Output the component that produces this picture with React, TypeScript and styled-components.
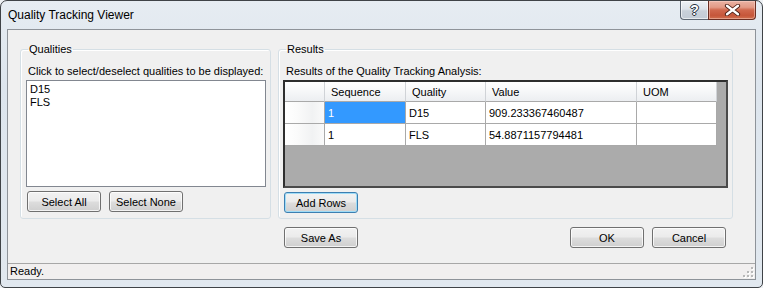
import React from "react";
import styled, { createGlobalStyle } from "styled-components";

const GlobalStyle = createGlobalStyle`
  html, body { margin: 0; padding: 0; background: #eef1f4; }
  body { font-family: "Liberation Sans", Arial, sans-serif; font-size: 11px; color: #000; }
  * { box-sizing: border-box; }
`;

const Window = styled.div`
  width: 763px;
  height: 288px;
  border: 1px solid #3f4347;
  border-radius: 7px 7px 5px 5px;
  background: linear-gradient(180deg, #e6ecf2 0%, #dde5ed 30%, #e1e8ef 100%);
  display: flex;
  flex-direction: column;
  padding: 0 6px 7px 6px;
  overflow: hidden;
`;

const TitleBar = styled.div`
  height: 28px;
  display: flex;
  align-items: flex-start;
`;

const Title = styled.div`
  flex: 1;
  font-size: 12px;
  line-height: 15px;
  padding: 7px 0 0 1px;
  color: #000;
`;

const CaptionButtons = styled.div`
  display: flex;
`;

const HelpButton = styled.div`
  width: 28px;
  height: 19px;
  border: 1px solid #5d6773;
  border-top: none;
  border-right: none;
  border-radius: 0 0 0 4px;
  background: linear-gradient(180deg, #eef2f6 0%, #dde3ea 45%, #c9d1da 55%, #c3ccd6 100%);
  box-shadow: inset 0 0 0 1px rgba(255, 255, 255, 0.6);
  display: flex;
  align-items: center;
  justify-content: center;
  font-size: 14px;
  font-weight: bold;
  color: #ffffff;
  text-shadow: 0 0 1px #2a3440, 1px 0 0 #2a3440, -1px 0 0 #2a3440, 0 1px 0 #2a3440, 0 -1px 0 #2a3440;
`;

const CloseButton = styled.div`
  width: 48px;
  height: 19px;
  border: 1px solid #6a2e22;
  border-top: none;
  border-radius: 0 0 4px 0;
  background: linear-gradient(180deg, #eab3a4 0%, #e29a86 35%, #d0684d 50%, #c6563a 80%, #d0704f 100%);
  box-shadow: inset 0 0 0 1px rgba(255, 220, 210, 0.45);
  display: flex;
  align-items: center;
  justify-content: center;
`;

const Client = styled.div`
  flex: 1;
  border: 1px solid #8e9399;
  background: #f0f0f0;
  display: flex;
  flex-direction: column;
`;

const Body = styled.div`
  flex: 1;
  display: grid;
  grid-template-columns: 251px 455px;
  column-gap: 7px;
  align-content: start;
  padding: 12px 0 0 12px;
`;

const Group = styled.fieldset<{ $padLeft: number }>`
  margin: 0;
  min-width: 0;
  padding: 0 4px 5px ${(p) => p.$padLeft}px;
  border: 1px solid #d5dfe5;
  border-radius: 3px;
  box-shadow: inset 1px 1px 0 #ffffff;
  display: flex;
  flex-direction: column;
  align-items: flex-start;
`;

const Legend = styled.legend<{ $shift: number }>`
  padding: 0 1px;
  margin-left: ${(p) => p.$shift}px;
  line-height: 14px;
  font-size: 11px;
`;

const Hint = styled.div<{ $padLeft: number }>`
  margin-top: 8px;
  padding-left: ${(p) => p.$padLeft}px;
  line-height: 14px;
`;

const ListBox = styled.div`
  margin-top: 2px;
  width: 240px;
  height: 107px;
  border: 1px solid #828790;
  background: #ffffff;
  padding: 2px 3px;
`;

const ListItem = styled.div`
  line-height: 13px;
`;

const ButtonRow = styled.div`
  display: flex;
  gap: 8px;
  margin-top: 4px;
  padding-left: 1px;
`;

const Button = styled.button<{ $focused?: boolean }>`
  width: 74px;
  height: 21px;
  margin: 0;
  padding: 0;
  font-family: "Liberation Sans", Arial, sans-serif;
  font-size: 11px;
  color: #000;
  border: 1px solid ${(p) => (p.$focused ? "#3c7fb1" : "#707070")};
  border-radius: 3px;
  background: linear-gradient(180deg, #f2f2f2 0%, #ebebeb 48%, #dddddd 52%, #cfcfcf 100%);
  box-shadow: inset 0 0 0 1px ${(p) => (p.$focused ? "#9fdcf7" : "rgba(255,255,255,0.75)")};
  cursor: default;
`;

const Grid = styled.div`
  margin-top: 2px;
  width: 445px;
  height: 108px;
  border: 2px solid;
  border-color: #2e2e2e #4a4a4a #4a4a4a #2e2e2e;
  background: #ababab;
  display: grid;
  grid-template-columns: 40px 81px 80px 151px 80px;
  grid-template-rows: 20px 22px 22px;
  align-content: start;
`;

type CellKind = "corner" | "header" | "rowhead" | "data";

const Cell = styled.div<{ $kind: CellKind; $selected?: boolean }>`
  display: flex;
  align-items: center;
  white-space: nowrap;
  overflow: hidden;
  padding-left: ${(p) => (p.$kind === "header" ? 6 : 3)}px;
  border-right: 1px solid ${(p) => (p.$kind === "header" || p.$kind === "corner" ? "#d0d3d7" : "#a9a9a9")};
  border-bottom: 1px solid #a9a9a9;
  color: ${(p) => (p.$selected ? "#ffffff" : "#000000")};
  background: ${(p) =>
    p.$selected
      ? "#3399ff"
      : p.$kind === "header" || p.$kind === "corner"
      ? "linear-gradient(180deg, #ffffff 0%, #f7f8f9 45%, #eceef1 100%)"
      : p.$kind === "rowhead"
      ? "linear-gradient(90deg, #ffffff 0%, #fbfbfb 30%, #f1f2f3 70%, #fafafa 100%)"
      : "#ffffff"};
`;

const Footer = styled.div`
  grid-column: 2;
  display: flex;
  gap: 8px;
  margin-top: 8px;
  padding: 0 7px 0 6px;
`;

const Spacer = styled.div`
  flex: 1;
`;

const StatusBar = styled.div`
  height: 16px;
  border-top: 1px solid #a7a7a7;
  background: #f1efef;
  display: flex;
  align-items: center;
  justify-content: space-between;
  padding-left: 2px;
`;

const StatusText = styled.span`
  line-height: 15px;
`;

const Grip = styled.svg`
  align-self: flex-end;
  margin: 0 1px 1px 0;
`;

const rows = [
  { seq: "1", quality: "D15", value: "909.233367460487", uom: "" },
  { seq: "1", quality: "FLS", value: "54.8871157794481", uom: "" },
];

export default function App() {
  return (
    <>
      <GlobalStyle />
      <Window>
        <TitleBar>
          <Title>Quality Tracking Viewer</Title>
          <CaptionButtons>
            <HelpButton>?</HelpButton>
            <CloseButton>
              <svg width="17" height="12" viewBox="0 0 17 12">
                <path d="M3 1.8 L14 10.2 M14 1.8 L3 10.2" stroke="#4a1e14" strokeWidth="4.2" strokeLinecap="round" />
                <path d="M3 1.8 L14 10.2 M14 1.8 L3 10.2" stroke="#ffffff" strokeWidth="2.4" strokeLinecap="round" />
              </svg>
            </CloseButton>
          </CaptionButtons>
        </TitleBar>
        <Client>
          <Body>
            <Group $padLeft={5}>
              <Legend $shift={2}>Qualities</Legend>
              <Hint $padLeft={2}>Click to select/deselect qualities to be displayed:</Hint>
              <ListBox>
                <ListItem>D15</ListItem>
                <ListItem>FLS</ListItem>
              </ListBox>
              <ButtonRow>
                <Button>Select All</Button>
                <Button>Select None</Button>
              </ButtonRow>
            </Group>
            <Group $padLeft={4}>
              <Legend $shift={3}>Results</Legend>
              <Hint $padLeft={3}>Results of the Quality Tracking Analysis:</Hint>
              <Grid>
                <Cell $kind="corner" />
                <Cell $kind="header">Sequence</Cell>
                <Cell $kind="header">Quality</Cell>
                <Cell $kind="header">Value</Cell>
                <Cell $kind="header">UOM</Cell>
                {rows.map((r, i) => (
                  <React.Fragment key={i}>
                    <Cell $kind="rowhead" />
                    <Cell $kind="data" $selected={i === 0}>{r.seq}</Cell>
                    <Cell $kind="data">{r.quality}</Cell>
                    <Cell $kind="data">{r.value}</Cell>
                    <Cell $kind="data">{r.uom}</Cell>
                  </React.Fragment>
                ))}
              </Grid>
              <ButtonRow>
                <Button $focused>Add Rows</Button>
              </ButtonRow>
            </Group>
            <Footer>
              <Button>Save As</Button>
              <Spacer />
              <Button>OK</Button>
              <Button>Cancel</Button>
            </Footer>
          </Body>
          <StatusBar>
            <StatusText>Ready.</StatusText>
            <Grip width="11" height="11" viewBox="0 0 11 11">
              {[
                [8, 0], [8, 4], [4, 4], [8, 8], [4, 8], [0, 8],
              ].map(([x, y], i) => (
                <g key={i}>
                  <rect x={x + 1} y={y + 1} width="2" height="2" fill="#ffffff" />
                  <rect x={x} y={y} width="2" height="2" fill="#b8b8b8" />
                </g>
              ))}
            </Grip>
          </StatusBar>
        </Client>
      </Window>
    </>
  );
}
